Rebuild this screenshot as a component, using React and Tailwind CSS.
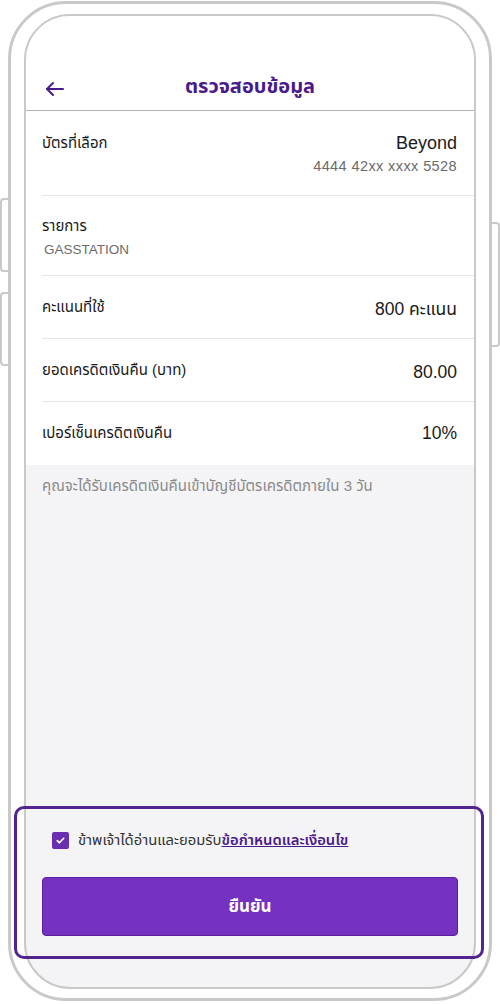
import React from 'react';

const FONT = { fontFamily: '"Liberation Sans", "Noto Sans Thai", "Noto Sans", sans-serif' };

function BackArrow() {
  return (
    <svg width="20" height="20" viewBox="0 0 20 20" fill="none" stroke="#4a1a8c" strokeWidth="2" strokeLinecap="round" strokeLinejoin="round">
      <path d="M2 10h16" />
      <path d="M8 4l-6 6 6 6" />
    </svg>
  );
}

function Row({ label, value }) {
  return (
    <div className="ml-4 pr-[17px] h-[63px] flex items-center justify-between border-b border-[#e6e6e6]">
      <span className="text-[15px] text-[#1a1a1a]">{label}</span>
      <span className="text-[17.5px] text-[#1a1a1a] pt-[4px]">{value}</span>
    </div>
  );
}

export default function App() {
  return (
    <div className="relative w-[500px] h-[1004px] bg-white overflow-hidden" style={FONT}>
      {/* side buttons */}
      <div className="absolute left-0 top-[198px] w-[10px] h-[74px] border-2 border-r-0 border-[#c9c9c9] rounded-l-[4px]" />
      <div className="absolute left-0 top-[292px] w-[10px] h-[74px] border-2 border-r-0 border-[#c9c9c9] rounded-l-[4px]" />
      <div className="absolute right-0 top-[222px] w-[10px] h-[125px] border-2 border-l-0 border-[#c9c9c9] rounded-r-[4px]" />

      {/* phone body */}
      <div className="ml-[8px] mt-[1px] w-[484px] h-[1000px] border-[3px] border-[#c9c9c9] rounded-[58px] bg-white pl-[13px] pt-[10px]">
        <div className="w-[452px] h-[975px] border-2 border-[#c9c9c9] rounded-[46px] overflow-hidden flex flex-col bg-[#f4f4f6]">
          {/* header */}
          <div className="bg-white h-[95px] shrink-0 border-b border-[#b4b4b4] flex items-end pb-[11px] px-[19px]">
            <BackArrow />
            <h1 className="flex-1 text-center text-[20px] font-bold text-[#4a1a8c] pr-[20px] leading-[26px]">ตรวจสอบข้อมูล</h1>
          </div>

          {/* details */}
          <div className="bg-white shrink-0">
            <div className="ml-4 pr-[17px] pt-[21px] pb-[20px] flex justify-between border-b border-[#e6e6e6]">
              <span className="text-[15px] leading-[22px] text-[#1a1a1a]">บัตรที่เลือก</span>
              <div className="flex flex-col items-end">
                <span className="text-[18px] leading-[22px] text-[#1a1a1a]">Beyond</span>
                <span className="mt-[3px] text-[14.5px] tracking-[0.4px] leading-[18px] text-[#6b6b6b]">4444 42xx xxxx 5528</span>
              </div>
            </div>
            <div className="ml-4 pr-[17px] pt-[19px] pb-[16px] border-b border-[#e6e6e6]">
              <div className="text-[15px] leading-[22px] text-[#1a1a1a]">รายการ</div>
              <div className="mt-[4px] text-[13.5px] leading-[18px] text-[#6b6b6b] pl-[2px]">GASSTATION</div>
            </div>
            <Row label="คะแนนที่ใช้" value="800 คะแนน" />
            <Row label="ยอดเครดิตเงินคืน (บาท)" value="80.00" />
            <div className="ml-4 pr-[17px] h-[63px] flex items-center justify-between">
              <span className="text-[15px] text-[#1a1a1a]">เปอร์เซ็นเครดิตเงินคืน</span>
              <span className="text-[17.5px] text-[#1a1a1a]">10%</span>
            </div>
          </div>

          {/* note */}
          <div className="px-4 pt-[12px] text-[15px] leading-[18px] text-[#8a8a8a]">
            คุณจะได้รับเครดิตเงินคืนเข้าบัญชีบัตรเครดิตภายใน 3 วัน
          </div>

          {/* bottom actions */}
          <div className="flex-1 flex flex-col justify-end px-4 pb-[51px]">
            <label className="flex items-center gap-[9px] pl-[10px] mb-[27px]">
              <span className="w-[17px] h-[17px] rounded-[2px] bg-[#6a2eb0] flex items-center justify-center">
                <svg width="11" height="11" viewBox="0 0 12 12" fill="none" stroke="white" strokeWidth="1.8" strokeLinecap="round" strokeLinejoin="round">
                  <path d="M2.5 6.2l2.3 2.3 4.7-4.9" />
                </svg>
              </span>
              <span className="text-[14.8px] leading-[20px] text-[#333]">
                ข้าพเจ้าได้อ่านและยอมรับ
                <span className="text-[#4a1a8c] font-semibold underline">ข้อกำหนดและเงื่อนไข</span>
              </span>
            </label>
            <button className="h-[59px] w-full rounded-[4px] bg-[#7531bf] border border-[#5a1f9e] text-white text-[17px] font-bold">
              ยืนยัน
            </button>
          </div>
        </div>
      </div>

      {/* highlight annotation */}
      <div className="absolute left-[14px] top-[806px] w-[470px] h-[153px] border-[3px] border-[#52248f] rounded-[10px] pointer-events-none" />
    </div>
  );
}
